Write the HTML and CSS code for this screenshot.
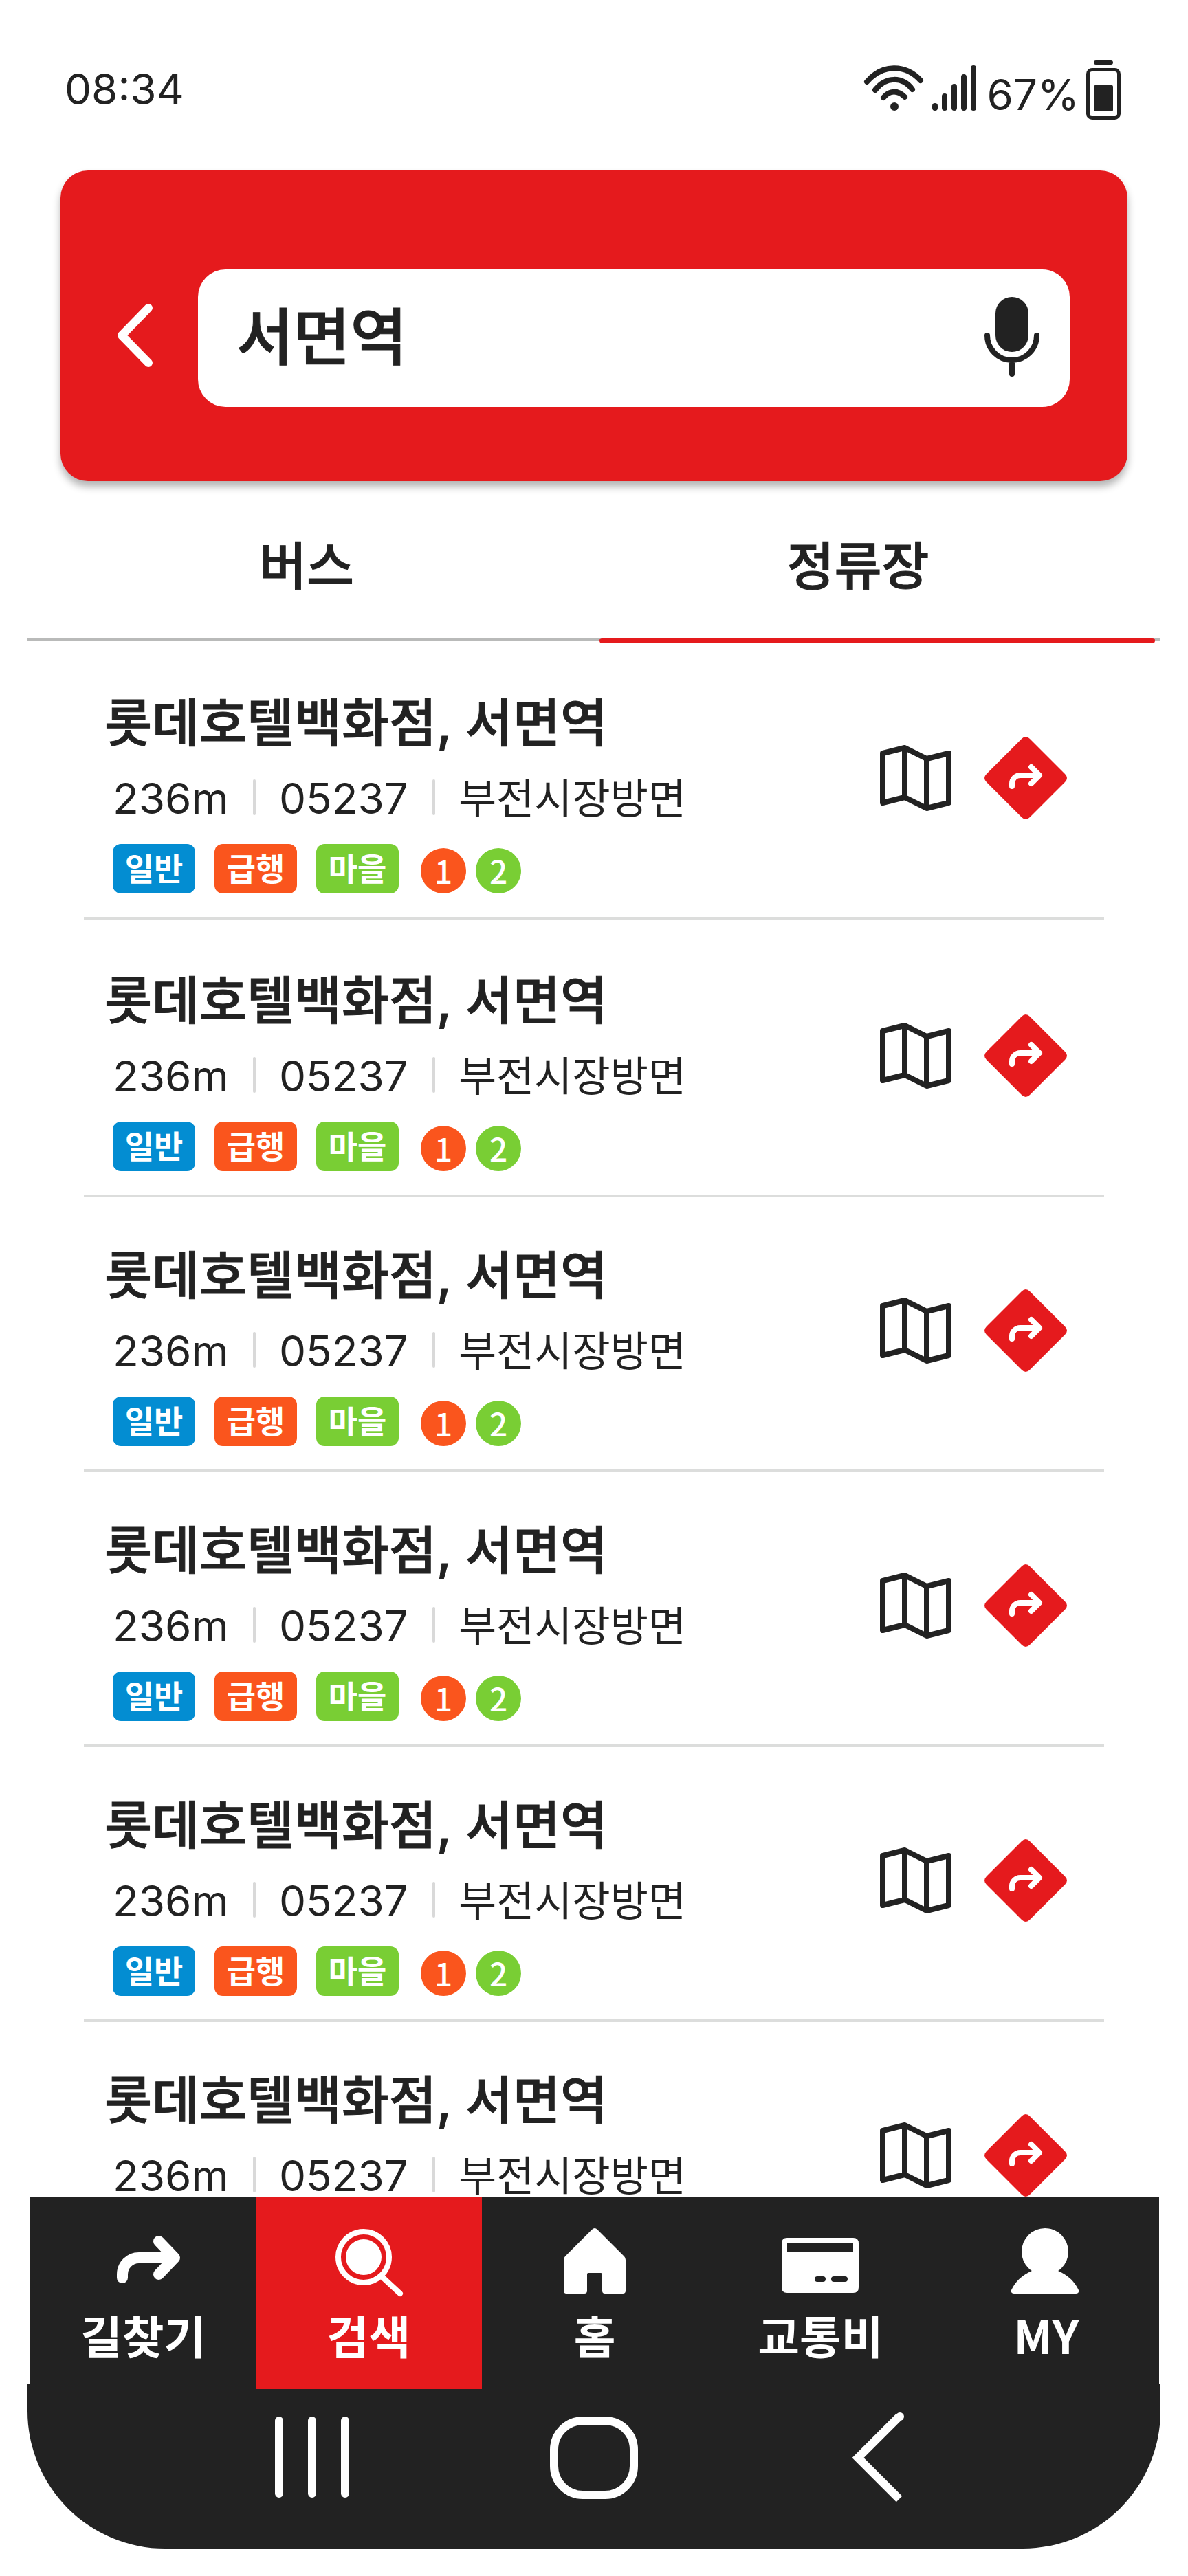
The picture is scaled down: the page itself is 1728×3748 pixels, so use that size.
FILE: index.html
```html
<!DOCTYPE html>
<html lang="ko">
<head>
<meta charset="utf-8">
<meta name="viewport" content="width=device-width, initial-scale=1">
<title>정류장 검색</title>
<link rel="stylesheet" href="styles.css">
</head>
<body>
<svg class="sprite" aria-hidden="true">
  <symbol id="icon-map" viewBox="0 0 104 96">
    <path d="M4 12 36 4 68 20 100 12V84L68 92 36 76 4 84ZM36 4V76M68 20V92" fill="none" stroke="currentColor" stroke-width="8" stroke-linejoin="round"/>
  </symbol>
  <symbol id="icon-route" viewBox="0 0 120 120">
    <path d="M54 3Q60-3 66 3L117 54Q123 60 117 66L66 117Q60 123 54 117L3 66Q-3 60 3 54Z" fill="#e51a1d"/>
    <path d="M40 72V68A12 12 0 0 1 52 56H78M68 44 80 56 68 68" fill="none" stroke="#fff" stroke-width="8" stroke-linecap="round" stroke-linejoin="round"/>
  </symbol>
</svg>

<header class="status">
  <time class="status-time">08:34</time>
  <div class="status-info">
    <svg class="icon-wifi" width="88" height="68" viewBox="0 0 88 68" aria-label="Wi-Fi">
      <g fill="none" stroke="currentColor" stroke-width="8" stroke-linecap="round">
        <path d="M5 25C27-1 61-1 83 23"/><path d="M17 37C32 17 57 17 71 36"/><path d="M29 48C38 37 50 37 60 47"/>
      </g>
      <circle cx="45" cy="61" r="6" fill="currentColor"/>
    </svg>
    <svg class="icon-signal" width="64" height="68" viewBox="0 0 64 68" aria-label="신호">
      <path d="M4 60V63M18 46V63M32 32V63M46 18V63M60 5V63" stroke="currentColor" stroke-width="8" stroke-linecap="round"/>
    </svg>
    <span class="status-percent">67%</span>
    <svg class="icon-battery" width="50" height="86" viewBox="0 0 50 86" aria-label="배터리">
      <rect x="11" y="0" width="28" height="6" rx="3" fill="currentColor"/>
      <rect x="2.500" y="13.500" width="45" height="70" rx="6" fill="none" stroke="currentColor" stroke-width="5"/>
      <rect x="11" y="36" width="28" height="38" rx="2" fill="currentColor"/>
    </svg>
  </div>
</header>

<form class="search" role="search">
  <button class="search-back" type="button" aria-label="뒤로">
    <svg width="56" height="96" viewBox="0 0 56 96"><path d="M48 8 9 48 48 88" fill="none" stroke="currentColor" stroke-width="12" stroke-linecap="round" stroke-linejoin="round"/></svg>
  </button>
  <div class="search-box">
    <input class="search-input" type="text" value="서면역" aria-label="검색어">
    <button class="search-mic" type="button" aria-label="음성 검색">
      <svg width="80" height="116" viewBox="0 0 80 116">
        <rect x="16" width="48" height="80" rx="24" fill="currentColor"/>
        <path d="M4 56A36 36 0 0 0 76 56M40 92V112" fill="none" stroke="currentColor" stroke-width="8" stroke-linecap="round"/>
      </svg>
    </button>
  </div>
</form>

<nav class="tabs">
  <a class="tab" href="#bus">버스</a>
  <a class="tab tab-active" href="#stop" aria-current="page">정류장</a>
</nav>

<ul class="stops" id="stop">
  <li class="stop">
    <div class="stop-body">
      <h2 class="stop-name">롯데호텔백화점, 서면역</h2>
      <p class="stop-meta"><span>236m</span><span>05237</span><span class="stop-way">부전시장방면</span></p>
      <div class="stop-lines"><span class="badge blue">일반</span><span class="badge orange">급행</span><span class="badge green">마을</span><span class="metro orange">1</span><span class="metro green">2</span></div>
    </div>
    <div class="stop-actions">
      <button type="button" aria-label="지도"><svg width="104" height="96"><use href="#icon-map"/></svg></button>
      <button type="button" aria-label="길찾기"><svg width="120" height="120"><use href="#icon-route"/></svg></button>
    </div>
  </li>
  <li class="stop">
    <div class="stop-body">
      <h2 class="stop-name">롯데호텔백화점, 서면역</h2>
      <p class="stop-meta"><span>236m</span><span>05237</span><span class="stop-way">부전시장방면</span></p>
      <div class="stop-lines"><span class="badge blue">일반</span><span class="badge orange">급행</span><span class="badge green">마을</span><span class="metro orange">1</span><span class="metro green">2</span></div>
    </div>
    <div class="stop-actions">
      <button type="button" aria-label="지도"><svg width="104" height="96"><use href="#icon-map"/></svg></button>
      <button type="button" aria-label="길찾기"><svg width="120" height="120"><use href="#icon-route"/></svg></button>
    </div>
  </li>
  <li class="stop">
    <div class="stop-body">
      <h2 class="stop-name">롯데호텔백화점, 서면역</h2>
      <p class="stop-meta"><span>236m</span><span>05237</span><span class="stop-way">부전시장방면</span></p>
      <div class="stop-lines"><span class="badge blue">일반</span><span class="badge orange">급행</span><span class="badge green">마을</span><span class="metro orange">1</span><span class="metro green">2</span></div>
    </div>
    <div class="stop-actions">
      <button type="button" aria-label="지도"><svg width="104" height="96"><use href="#icon-map"/></svg></button>
      <button type="button" aria-label="길찾기"><svg width="120" height="120"><use href="#icon-route"/></svg></button>
    </div>
  </li>
  <li class="stop">
    <div class="stop-body">
      <h2 class="stop-name">롯데호텔백화점, 서면역</h2>
      <p class="stop-meta"><span>236m</span><span>05237</span><span class="stop-way">부전시장방면</span></p>
      <div class="stop-lines"><span class="badge blue">일반</span><span class="badge orange">급행</span><span class="badge green">마을</span><span class="metro orange">1</span><span class="metro green">2</span></div>
    </div>
    <div class="stop-actions">
      <button type="button" aria-label="지도"><svg width="104" height="96"><use href="#icon-map"/></svg></button>
      <button type="button" aria-label="길찾기"><svg width="120" height="120"><use href="#icon-route"/></svg></button>
    </div>
  </li>
  <li class="stop">
    <div class="stop-body">
      <h2 class="stop-name">롯데호텔백화점, 서면역</h2>
      <p class="stop-meta"><span>236m</span><span>05237</span><span class="stop-way">부전시장방면</span></p>
      <div class="stop-lines"><span class="badge blue">일반</span><span class="badge orange">급행</span><span class="badge green">마을</span><span class="metro orange">1</span><span class="metro green">2</span></div>
    </div>
    <div class="stop-actions">
      <button type="button" aria-label="지도"><svg width="104" height="96"><use href="#icon-map"/></svg></button>
      <button type="button" aria-label="길찾기"><svg width="120" height="120"><use href="#icon-route"/></svg></button>
    </div>
  </li>
  <li class="stop">
    <div class="stop-body">
      <h2 class="stop-name">롯데호텔백화점, 서면역</h2>
      <p class="stop-meta"><span>236m</span><span>05237</span><span class="stop-way">부전시장방면</span></p>
    </div>
    <div class="stop-actions">
      <button type="button" aria-label="지도"><svg width="104" height="96"><use href="#icon-map"/></svg></button>
      <button type="button" aria-label="길찾기"><svg width="120" height="120"><use href="#icon-route"/></svg></button>
    </div>
  </li>
</ul>

<footer class="bottom">
  <nav class="menu">
    <a class="menu-item" href="#route">
      <svg width="120" height="100" viewBox="0 0 120 100"><path d="M30 72V67A24 24 0 0 1 54 43H98M83 19 106 43 83 67" fill="none" stroke="currentColor" stroke-width="16" stroke-linecap="round" stroke-linejoin="round"/></svg>
      <span>길찾기</span>
    </a>
    <a class="menu-item menu-active" href="#search" aria-current="page">
      <svg width="120" height="100" viewBox="0 0 120 100"><circle cx="52" cy="42" r="37" fill="none" stroke="currentColor" stroke-width="8"/><circle cx="52" cy="42" r="26" fill="currentColor"/><path d="M78 70 105 95" stroke="currentColor" stroke-width="8" stroke-linecap="round"/></svg>
      <span>검색</span>
    </a>
    <a class="menu-item" href="#home">
      <svg width="120" height="100" viewBox="0 0 120 100"><path d="M15 46Q15 43 17 41L56 2Q60-2 64 2L103 41Q105 43 105 46V91Q105 95 101 95H75Q71 95 71 91V67Q71 65 69 65H51Q49 65 49 67V91Q49 95 45 95H19Q15 95 15 91Z" fill="currentColor"/></svg>
      <span>홈</span>
    </a>
    <a class="menu-item" href="#fare">
      <svg width="120" height="100" viewBox="0 0 120 100"><path fill-rule="evenodd" d="M12 14H108Q116 14 116 22V86Q116 94 108 94H12Q4 94 4 86V22Q4 14 12 14ZM12 22V34H108V22ZM56 70A4 4 0 0 0 56 78H64A4 4 0 0 0 64 70ZM80 70A4 4 0 0 0 80 78H96A4 4 0 0 0 96 70Z" fill="currentColor"/></svg>
      <span>교통비</span>
    </a>
    <a class="menu-item" href="#my">
      <svg width="120" height="100" viewBox="0 0 120 100"><circle cx="58" cy="34" r="34" fill="currentColor"/><path d="M39 62Q18 71 9 90 8 95 13 95H103Q108 95 107 90 98 71 77 62Z" fill="currentColor"/></svg>
      <span>MY</span>
    </a>
  </nav>
  <div class="system">
    <button type="button" aria-label="최근 앱"><svg width="128" height="136" viewBox="0 0 128 136"><path d="M18 14V120M66 14V120M114 14V120" stroke="currentColor" stroke-width="12" stroke-linecap="round"/></svg></button>
    <button type="button" aria-label="홈 화면"><svg width="128" height="136" viewBox="0 0 128 136"><rect x="6" y="14" width="116" height="108" rx="42" fill="none" stroke="currentColor" stroke-width="12"/></svg></button>
    <button type="button" aria-label="이전"><svg width="128" height="136" viewBox="0 0 128 136"><path d="M96 8 36 68 96 128" fill="none" stroke="currentColor" stroke-width="12"/><circle cx="97" cy="8" r="6" fill="currentColor"/></svg></button>
  </div>
</footer>
</body>
</html>
```
FILE: styles.css
```css
:root {
  --ink: #222;
  --red: #e51a1d;
  --orange: #fa551d;
  --green: #79ce34;
  --blue: #038dd2;
}

* {
  box-sizing: border-box;
}

body {
  display: flex;
  flex-direction: column;
  height: 100vh;
  margin: 0;
  padding-bottom: 40px;
  background: #fff;
  color: var(--ink);
  font-family: Inter, "Noto Sans CJK KR", sans-serif;
}

button {
  display: flex;
  padding: 0;
  border: 0;
  background: none;
  color: inherit;
}

a {
  color: inherit;
  text-decoration: none;
}

svg {
  display: block;
  flex: none;
}

.sprite {
  position: absolute;
  width: 0;
  height: 0;
}

/* Phone status bar */
.status {
  display: flex;
  flex: none;
  justify-content: space-between;
  height: 248px;
  padding: 88px 98px 0 94px;
  font-size: 62px;
  line-height: 84px;
}

.status-info {
  display: flex;
  align-items: flex-start;
}

.icon-wifi,
.icon-signal {
  margin: 6px 12px 0 0;
}

.status-percent {
  margin: 8px 10px 0 4px;
}

/* Search panel */
.search {
  display: flex;
  flex: none;
  align-items: center;
  gap: 64px;
  margin: 0 88px;
  padding: 144px 84px 108px 80px;
  border-radius: 40px;
  background: var(--red);
  box-shadow: 0 8px 12px rgba(0, 0, 0, 0.3);
}

.search-back {
  margin-bottom: 8px;
  color: #fff;
}

.search-box {
  display: flex;
  flex: 1;
  align-items: center;
  min-width: 0;
  height: 200px;
  padding: 0 44px 0 56px;
  border-radius: 40px;
  background: #fff;
}

.search-input {
  flex: 1;
  width: 100%;
  min-width: 0;
  height: 160px;
  padding: 0 0 16px;
  border: 0;
  outline: 0;
  background: none;
  color: inherit;
  font: 500 90px "Noto Sans CJK KR", sans-serif;
}

.search-mic {
  margin-bottom: 4px;
}

.search-input,
.tabs,
.stop-name {
  -webkit-text-stroke: 1px currentColor;
}

/* Tabs */
.tabs {
  position: relative;
  display: grid;
  flex: none;
  grid-template-columns: 203fr 198fr;
  height: 232px;
  margin: 0 40px;
  padding: 74px 44px 0 0;
  border-bottom: 4px solid #b9bab9;
  font-size: 75px;
  font-weight: 500;
  line-height: 100px;
  text-align: center;
}

.tabs::after {
  position: absolute;
  right: 8px;
  bottom: -8px;
  width: 49%;
  height: 8px;
  border-radius: 4px;
  background: var(--red);
  content: "";
}

/* Stop list */
.stops {
  flex: 1;
  min-height: 0;
  margin: 0;
  padding: 6px 122px 0;
  overflow: hidden;
  list-style: none;
}

.stop {
  display: flex;
  justify-content: space-between;
  height: 400px;
  padding: 64px 54px 0 30px;
  border-bottom: 4px solid #dcdddc;
}

.stop:first-child {
  margin-bottom: 4px;
}

.stop-name {
  margin: 0 0 32px;
  font-size: 75px;
  font-weight: 500;
  line-height: 100px;
}

.stop-meta {
  display: flex;
  align-items: center;
  height: 56px;
  margin: 0 0 38px;
  padding-left: 12px;
  font-size: 62px;
  line-height: 56px;
}

.stop-meta span {
  display: flex;
  align-items: center;
}

.stop-meta span + span::before {
  width: 4px;
  height: 52px;
  margin: 0 34px 4px 35px;
  border-radius: 2px;
  background: #d9d9d9;
  content: "";
}

.stop-meta .stop-way {
  font-size: 60px;
}

.stop-lines {
  display: flex;
  align-items: flex-end;
  padding-left: 12px;
  color: #fff;
}

.badge {
  width: 120px;
  height: 72px;
  margin-right: 28px;
  border-radius: 12px;
  font-size: 46px;
  font-weight: 700;
  line-height: 72px;
  text-align: center;
}

.metro {
  width: 66px;
  height: 66px;
  margin: 0 10px 0 4px;
  border-radius: 50%;
  font-family: "Noto Sans CJK KR", sans-serif;
  font-size: 46px;
  font-weight: 500;
  line-height: 64px;
  text-align: center;
}

.blue {
  background: var(--blue);
}

.orange {
  background: var(--orange);
}

.green {
  background: var(--green);
}

.stop-actions {
  display: flex;
  align-items: center;
  gap: 48px;
  height: 120px;
  margin-top: 70px;
}

/* App menu and system bar */
.bottom {
  flex: none;
  color: #fff;
}

.menu {
  position: relative;
  display: grid;
  grid-template-columns: repeat(5, 1fr);
  height: 280px;
  margin: 0 42px 0 44px;
  background: var(--ink);
}

.menu-item {
  display: flex;
  flex-direction: column;
  align-items: center;
  gap: 14px;
  padding-top: 46px;
  font-family: "Noto Sans CJK KR", sans-serif;
  font-size: 66px;
  font-weight: 700;
  line-height: 80px;
}

.menu-active {
  background: var(--red);
}

.system {
  display: grid;
  grid-template-columns: repeat(3, 1fr);
  align-items: center;
  justify-items: center;
  height: 240px;
  margin: -8px 40px 0;
  padding: 0 206px 24px;
  border-radius: 0 0 200px 200px;
  background: var(--ink);
}
```
